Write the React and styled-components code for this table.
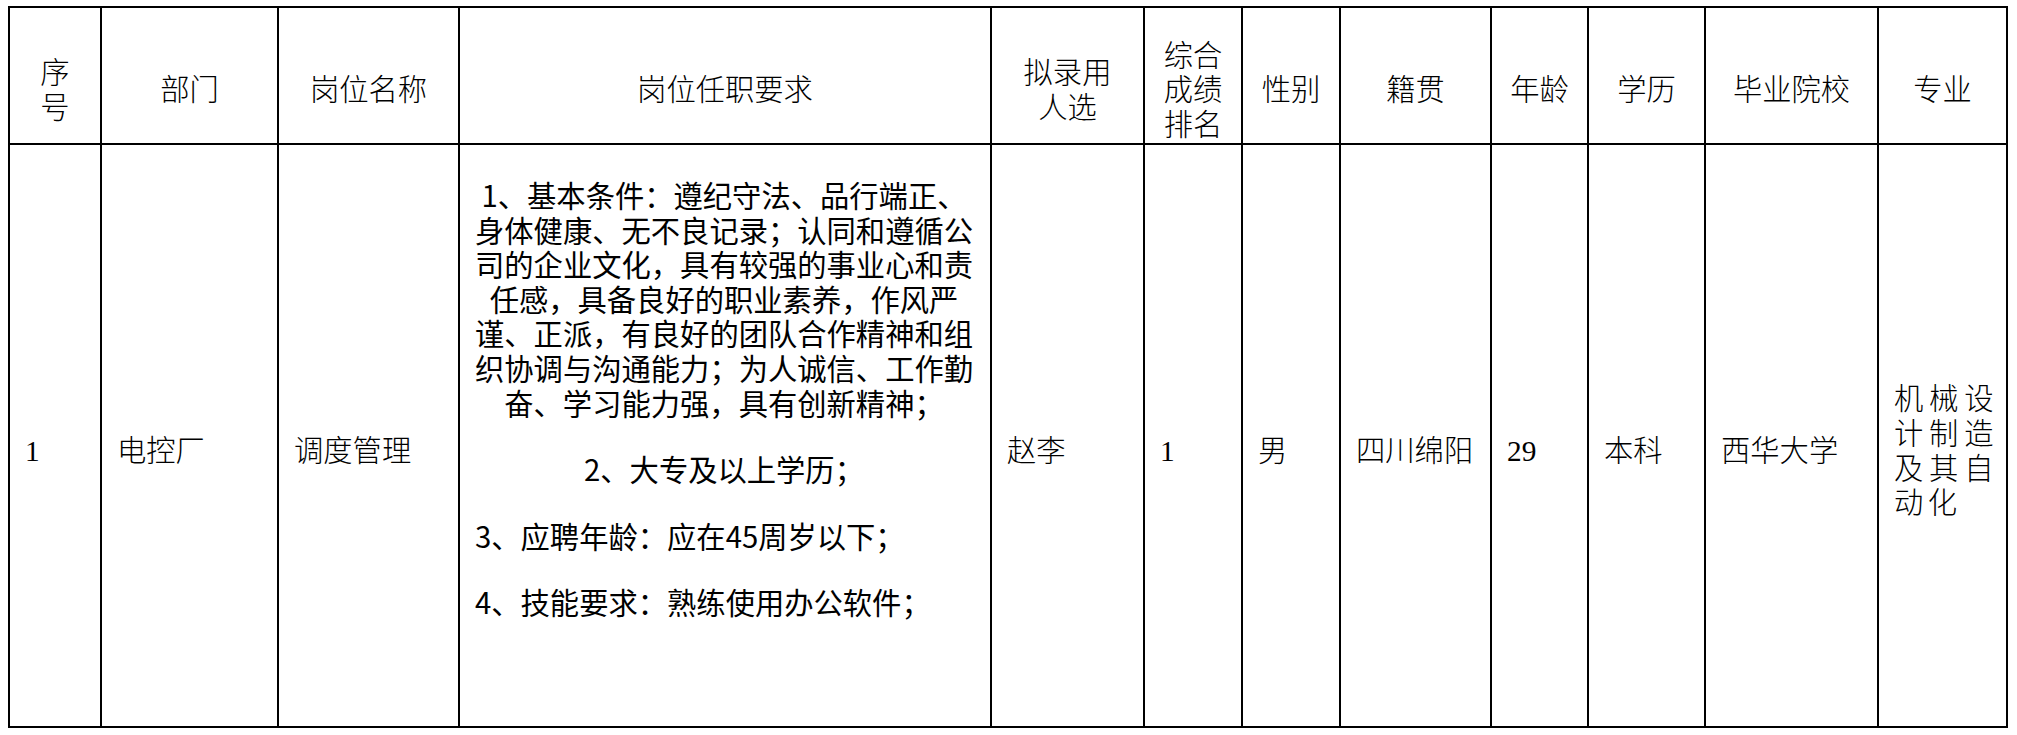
import React from "react";
import styled, { createGlobalStyle } from "styled-components";

const GlobalStyle = createGlobalStyle`
    html, body {
        margin: 0;
        padding: 0;
        background: #fff;
    }
    body {
        font-family: "Liberation Serif", "Noto Sans CJK SC", serif;
        color: #000;
    }
`

const Page = styled.div`
    padding: 6px 0 0 8px;
`

const Table = styled.table`
    border-collapse: collapse;
    table-layout: fixed;
    width: 2000px;
`

const Col = styled.col`
    width: ${p => p.$w}px;
`

const Row = styled.tr`
    height: ${p => p.$h}px;
`

const HeadCell = styled.th`
    border: 2px solid #000;
    padding: 30px 2px 0;
    vertical-align: middle;
    text-align: center;
    font-weight: 300;
    font-size: 29.3px;
    line-height: 34.6px;
    white-space: nowrap;
`

const Cell = styled.td`
    border: 2px solid #000;
    padding: 32px 6px 0 15px;
    vertical-align: middle;
    text-align: left;
    font-weight: 300;
    font-size: 29.3px;
    line-height: 34.6px;
    white-space: nowrap;
`

const Requirements = styled(Cell)`
    vertical-align: top;
    padding: 32px 17px 0 15px;
    font-weight: 400;
    font-family: "Noto Sans CJK SC", sans-serif;
`

const Para = styled.p`
    margin: ${p => (p.$first ? 0 : 32)}px 0 0;
    text-align: ${p => p.$align};
    white-space: nowrap;
`

const Major = styled(Cell)`
    white-space: normal;
    text-align: justify;
    letter-spacing: 4.5px;
    padding-right: 8px;
`

const columns = [92, 177, 181, 532, 153, 98, 98, 151, 97, 117, 173, 129];

const headers = [
    ["序", "号"],
    ["部门"],
    ["岗位名称"],
    ["岗位任职要求"],
    ["拟录用", "人选"],
    ["综合", "成绩", "排名"],
    ["性别"],
    ["籍贯"],
    ["年龄"],
    ["学历"],
    ["毕业院校"],
    ["专业"],
];

const basicLines = [
    "1、基本条件：遵纪守法、品行端正、",
    "身体健康、无不良记录；认同和遵循公",
    "司的企业文化，具有较强的事业心和责",
    "任感，具备良好的职业素养，作风严",
    "谨、正派，有良好的团队合作精神和组",
    "织协调与沟通能力；为人诚信、工作勤",
    "奋、学习能力强，具有创新精神；",
];

function lines(parts) {
    return parts.map((text, i) => (
        <React.Fragment key={i}>
            {i > 0 && <br />}
            {text}
        </React.Fragment>
    ));
}

export default function App() {
    return (
        <>
            <GlobalStyle />
            <Page lang="zh-CN">
                <Table>
                    <colgroup>
                        {columns.map((w, i) => <Col key={i} $w={w} />)}
                    </colgroup>
                    <thead>
                        <Row $h={137}>
                            {headers.map((h, i) => <HeadCell key={i}>{lines(h)}</HeadCell>)}
                        </Row>
                    </thead>
                    <tbody>
                        <Row $h={583}>
                            <Cell>1</Cell>
                            <Cell>电控厂</Cell>
                            <Cell>调度管理</Cell>
                            <Requirements>
                                <Para $first $align="center">{lines(basicLines)}</Para>
                                <Para $align="center">2、大专及以上学历；</Para>
                                <Para $align="left">3、应聘年龄：应在45周岁以下；</Para>
                                <Para $align="left">4、技能要求：熟练使用办公软件；</Para>
                            </Requirements>
                            <Cell>赵李</Cell>
                            <Cell>1</Cell>
                            <Cell>男</Cell>
                            <Cell>四川绵阳</Cell>
                            <Cell>29</Cell>
                            <Cell>本科</Cell>
                            <Cell>西华大学</Cell>
                            <Major>机械设计制造及其自动化</Major>
                        </Row>
                    </tbody>
                </Table>
            </Page>
        </>
    );
}
